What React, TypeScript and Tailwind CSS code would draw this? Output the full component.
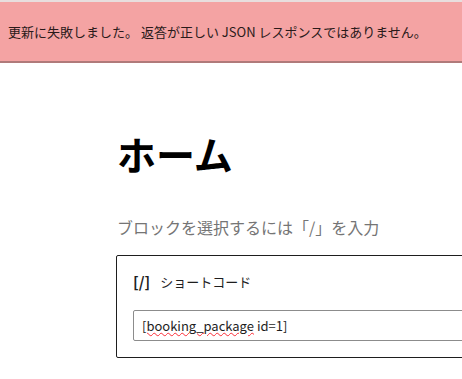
export default function App() {
  return (
    <div className="w-[462px] h-[379px] overflow-hidden bg-white" style={{ fontFamily: '"Noto Sans CJK JP", "Liberation Sans", sans-serif' }}>
      <div className="h-[2px] bg-[#e8dede]" />
      <div className="h-[61px] bg-[#f4a3a3] border-b-[2px] border-[#b07a7a] flex items-center pl-[8px] text-[13px] text-[#2a1a1a]">
        更新に失敗しました。 返答が正しい JSON レスポンスではありません。
      </div>
      <div className="pl-[117px] pt-[66px]">
        <h1 className="text-[39px] font-bold leading-[48px] text-black">ホーム</h1>
        <p className="mt-[38px] text-[16px] leading-[24px] text-[#757575]">ブロックを選択するには「/」を入力</p>
        <div className="mt-[16px] -ml-[1px] w-[400px] h-[103px] border border-[#1e1e1e] rounded-[2px] pl-[16px] pt-[16px]">
          <div className="flex items-center gap-[10px] text-[13px] text-[#1e1e1e] h-[20px]">
            <span className="font-bold text-[15px]">[/]</span>
            <span>ショートコード</span>
          </div>
          <div className="mt-[18px] h-[31px] border border-[#8c8c8c] rounded-[2px] flex items-center pl-[8px] text-[13px] text-[#1e1e1e]">
            <span className="underline decoration-wavy decoration-red-500 decoration-[1px]">[booking_package</span>
            <span>&nbsp;id=1]</span>
          </div>
        </div>
      </div>
    </div>
  )
}
